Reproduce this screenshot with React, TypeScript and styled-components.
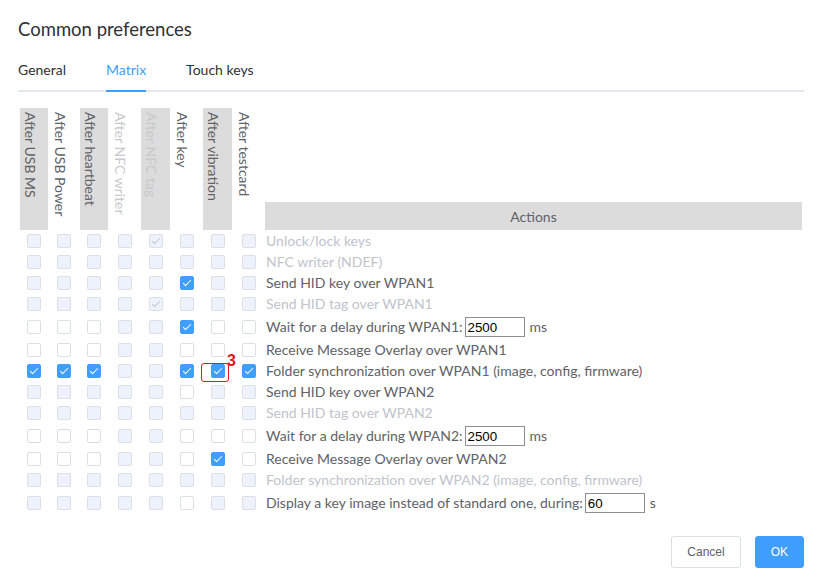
import React from "react";
import styled, { createGlobalStyle, css } from "styled-components";

type CellState = "D" | "d" | "E" | "C";

interface Column {
  label: string;
  shaded?: boolean;
  disabled?: boolean;
}

interface Action {
  states: string;
  text: string;
  disabled?: boolean;
  input?: { value: string; unit: string };
  mark?: number;
}

const columns: Column[] = [
  { label: "After USB MS", shaded: true },
  { label: "After USB Power" },
  { label: "After heartbeat", shaded: true },
  { label: "After NFC writer", disabled: true },
  { label: "After NFC tag", shaded: true, disabled: true },
  { label: "After key" },
  { label: "After vibration", shaded: true },
  { label: "After testcard" },
];

const actions: Action[] = [
  { states: "DDDDdDDD", text: "Unlock/lock keys", disabled: true },
  { states: "DDDDDDDD", text: "NFC writer (NDEF)", disabled: true },
  { states: "DDDDDCDD", text: "Send HID key over WPAN1" },
  { states: "DDDDdDDD", text: "Send HID tag over WPAN1", disabled: true },
  {
    states: "EEEDDCEE",
    text: "Wait for a delay during WPAN1:",
    input: { value: "2500", unit: "ms" },
  },
  { states: "EEEDDEEE", text: "Receive Message Overlay over WPAN1" },
  {
    states: "CCCDDCCC",
    text: "Folder synchronization over WPAN1 (image, config, firmware)",
    mark: 6,
  },
  { states: "DDDDDEDD", text: "Send HID key over WPAN2" },
  { states: "DDDDDDDD", text: "Send HID tag over WPAN2", disabled: true },
  {
    states: "EEEDDEEE",
    text: "Wait for a delay during WPAN2:",
    input: { value: "2500", unit: "ms" },
  },
  { states: "EEEDDECE", text: "Receive Message Overlay over WPAN2" },
  {
    states: "DDDDDDDD",
    text: "Folder synchronization over WPAN2 (image, config, firmware)",
    disabled: true,
  },
  {
    states: "DDDDDEDD",
    text: "Display a key image instead of standard one, during:",
    input: { value: "60", unit: "s" },
  },
];

const GlobalStyle = createGlobalStyle`
  body {
    margin: 0;
    background: #fff;
    font-family: Lato, "Open Sans", sans-serif;
  }
`;

const Dialog = styled.div`
  padding: 0 19px 0 18px;
`;

const Title = styled.h2`
  margin: 0;
  padding-top: 17px;
  font-size: 18.5px;
  line-height: 24px;
  font-weight: 400;
  color: #303133;
`;

const Tabs = styled.div`
  display: flex;
  margin-top: 9px;
  border-bottom: 2px solid #e4e7ed;
`;

const Tab = styled.div<{ $active?: boolean }>`
  position: relative;
  padding: 0 20px;
  height: 40px;
  line-height: 40px;
  font-size: 14px;
  color: ${(p) => (p.$active ? "#409eff" : "#303133")};

  &:first-child {
    padding-left: 0;
  }

  ${(p) =>
    p.$active &&
    css`
      &::after {
        content: "";
        position: absolute;
        left: 20px;
        right: 20px;
        bottom: -2px;
        height: 2px;
        background: #409eff;
      }
    `}
`;

const gridColumns = css`
  display: grid;
  grid-template-columns: 28px 28px 28px 29px 29px 29px 29px 29px 1fr;
  column-gap: 2px;
  padding: 0 2px;
`;

const Matrix = styled.div`
  margin-top: 16px;
`;

const HeaderRow = styled.div`
  ${gridColumns};
  height: 122px;
`;

const HeaderCell = styled.div<{ $shaded?: boolean; $disabled?: boolean }>`
  display: flex;
  justify-content: flex-start;
  align-items: flex-start;
  padding: 4px 0 0 2px;
  background: ${(p) => (p.$shaded ? "#dcdcdc" : "transparent")};
  color: ${(p) => (p.$disabled ? "#c8c9cc" : "#606266")};
  font-size: 14px;
`;

const VerticalLabel = styled.span`
  writing-mode: vertical-rl;
  line-height: 16px;
  white-space: nowrap;
`;

const ActionsHead = styled.div`
  align-self: end;
  height: 28px;
  display: flex;
  align-items: center;
  justify-content: center;
  background: #dcdcdc;
  color: #606266;
  font-size: 14px;
`;

const Row = styled.div<{ $tall?: boolean }>`
  ${gridColumns};
  height: ${(p) => (p.$tall ? 25 : 21)}px;
  align-items: center;
`;

const CheckCell = styled.div`
  position: relative;
  display: flex;
  justify-content: center;
`;

const Box = styled.span<{ $checked?: boolean; $disabled?: boolean }>`
  position: relative;
  display: inline-block;
  width: 14px;
  height: 14px;
  box-sizing: border-box;
  border-radius: 2px;
  border: 1px solid
    ${(p) => (p.$checked && !p.$disabled ? "#409eff" : "#dcdfe6")};
  background: ${(p) =>
    p.$disabled ? "#edf2fc" : p.$checked ? "#409eff" : "#fff"};

  ${(p) =>
    p.$checked &&
    css`
      &::after {
        content: "";
        box-sizing: content-box;
        position: absolute;
        left: 4px;
        top: 1px;
        width: 3px;
        height: 7px;
        border: 1px solid ${p.$disabled ? "#c0c4cc" : "#fff"};
        border-left: 0;
        border-top: 0;
        transform: rotate(45deg);
      }
    `}
`;

const MarkFrame = styled.span`
  position: absolute;
  left: -2px;
  top: -1px;
  width: 28px;
  height: 19px;
  box-sizing: border-box;
  border: 1px solid #e0161e;
  border-radius: 3px;
`;

const MarkNumber = styled.span`
  position: absolute;
  left: 24px;
  top: -11px;
  font-family: "Liberation Sans", Arial, sans-serif;
  font-weight: 700;
  font-size: 16px;
  line-height: 16px;
  color: #e0161e;
`;

const ActionLabel = styled.div<{ $disabled?: boolean }>`
  padding-left: 1px;
  font-size: 14px;
  line-height: 21px;
  white-space: nowrap;
  color: ${(p) => (p.$disabled ? "#c0c4cc" : "#606266")};
`;

const NumberInput = styled.input`
  width: 60px;
  height: 20px;
  box-sizing: border-box;
  margin: 0 0 0 2px;
  padding: 1px 2px;
  border: 1px solid #8f8f8f;
  border-radius: 0;
  font-family: "Liberation Sans", Arial, sans-serif;
  font-size: 13.33px;
  color: #000;
  vertical-align: baseline;
`;

const Unit = styled.span`
  margin-left: 5px;
`;

const Footer = styled.div`
  display: flex;
  justify-content: flex-end;
  gap: 14px;
  padding-top: 21px;
`;

const Button = styled.button<{ $primary?: boolean }>`
  height: 32px;
  padding: 9px 15px;
  box-sizing: border-box;
  font-family: "Liberation Sans", Arial, sans-serif;
  font-size: 12px;
  line-height: 12px;
  border-radius: 3px;
  border: 1px solid ${(p) => (p.$primary ? "#409eff" : "#dcdfe6")};
  background: ${(p) => (p.$primary ? "#409eff" : "#fff")};
  color: ${(p) => (p.$primary ? "#fff" : "#606266")};
  cursor: pointer;
`;

const Checkbox: React.FC<{ state: CellState }> = ({ state }) => (
  <Box
    $checked={state === "C" || state === "d"}
    $disabled={state === "D" || state === "d"}
  />
);

const App: React.FC = () => {
  return (
    <Dialog>
      <GlobalStyle />
      <Title>Common preferences</Title>
      <Tabs>
        <Tab>General</Tab>
        <Tab $active>Matrix</Tab>
        <Tab>Touch keys</Tab>
      </Tabs>

      <Matrix>
        <HeaderRow>
          {columns.map((c) => (
            <HeaderCell key={c.label} $shaded={c.shaded} $disabled={c.disabled}>
              <VerticalLabel>{c.label}</VerticalLabel>
            </HeaderCell>
          ))}
          <ActionsHead>Actions</ActionsHead>
        </HeaderRow>

        {actions.map((a) => (
          <Row key={a.text} $tall={!!a.input}>
            {a.states.split("").map((s, i) => (
              <CheckCell key={i}>
                <Checkbox state={s as CellState} />
                {a.mark === i && (
                  <>
                    <MarkFrame />
                    <MarkNumber>3</MarkNumber>
                  </>
                )}
              </CheckCell>
            ))}
            <ActionLabel $disabled={a.disabled}>
              {a.text}
              {a.input && (
                <>
                  <NumberInput type="text" defaultValue={a.input.value} />
                  <Unit>{a.input.unit}</Unit>
                </>
              )}
            </ActionLabel>
          </Row>
        ))}
      </Matrix>

      <Footer>
        <Button>Cancel</Button>
        <Button $primary>OK</Button>
      </Footer>
    </Dialog>
  );
};

export default App;
